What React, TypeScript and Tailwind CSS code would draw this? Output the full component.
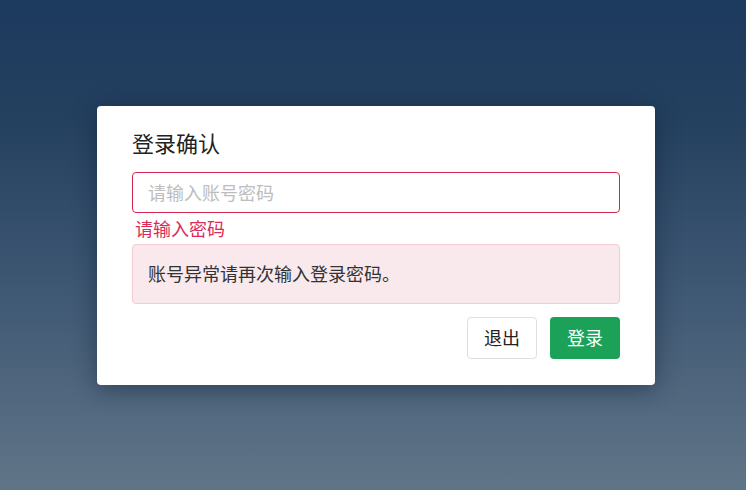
import { useState } from "react";

function LoginConfirm() {
  const [password, setPassword] = useState("");

  return (
    <div className="w-[558px] rounded-[4px] bg-white px-[35px] pt-[22px] pb-[26px] shadow-[0_4px_24px_rgba(10,25,45,0.45)]">
      <h2 className="mb-[16px] text-[22px] leading-[28px] text-[#222]">登录确认</h2>
      <input
        className="block h-[41px] w-full rounded-[4px] border border-[#d7264f] px-[15px] text-[18px] text-[#333] outline-none placeholder:text-[#bdbdbd]"
        type="password"
        placeholder="请输入账号密码"
        value={password}
        onChange={(e) => setPassword(e.target.value)}
      />
      <p className="mt-[3px] pl-[3px] text-[18px] leading-[24px] text-[#dc2a59]">请输入密码</p>
      <div className="mt-[4px] flex h-[60px] items-center rounded-[4px] border border-[#f5cbd2] bg-[#f9e9ec] px-[15px] text-[18px] text-[#333]">
        账号异常请再次输入登录密码。
      </div>
      <div className="mt-[13px] flex justify-end gap-[13px]">
        <button className="h-[42px] w-[70px] rounded-[4px] border border-[#dcdfe4] bg-white text-[18px] text-[#222]">
          退出
        </button>
        <button className="h-[42px] w-[70px] rounded-[4px] bg-[#1ba158] text-[18px] text-white">
          登录
        </button>
      </div>
    </div>
  );
}

export default function App() {
  return (
    <div
      className="flex h-[490px] w-full items-center justify-center bg-[linear-gradient(to_bottom,#1d3a5f_0%,#24415f_25%,#3f5874_60%,#617588_100%)] pl-[6px]"
      style={{ fontFamily: '"Noto Sans CJK SC", "Noto Sans", sans-serif' }}
    >
      <LoginConfirm />
    </div>
  );
}
